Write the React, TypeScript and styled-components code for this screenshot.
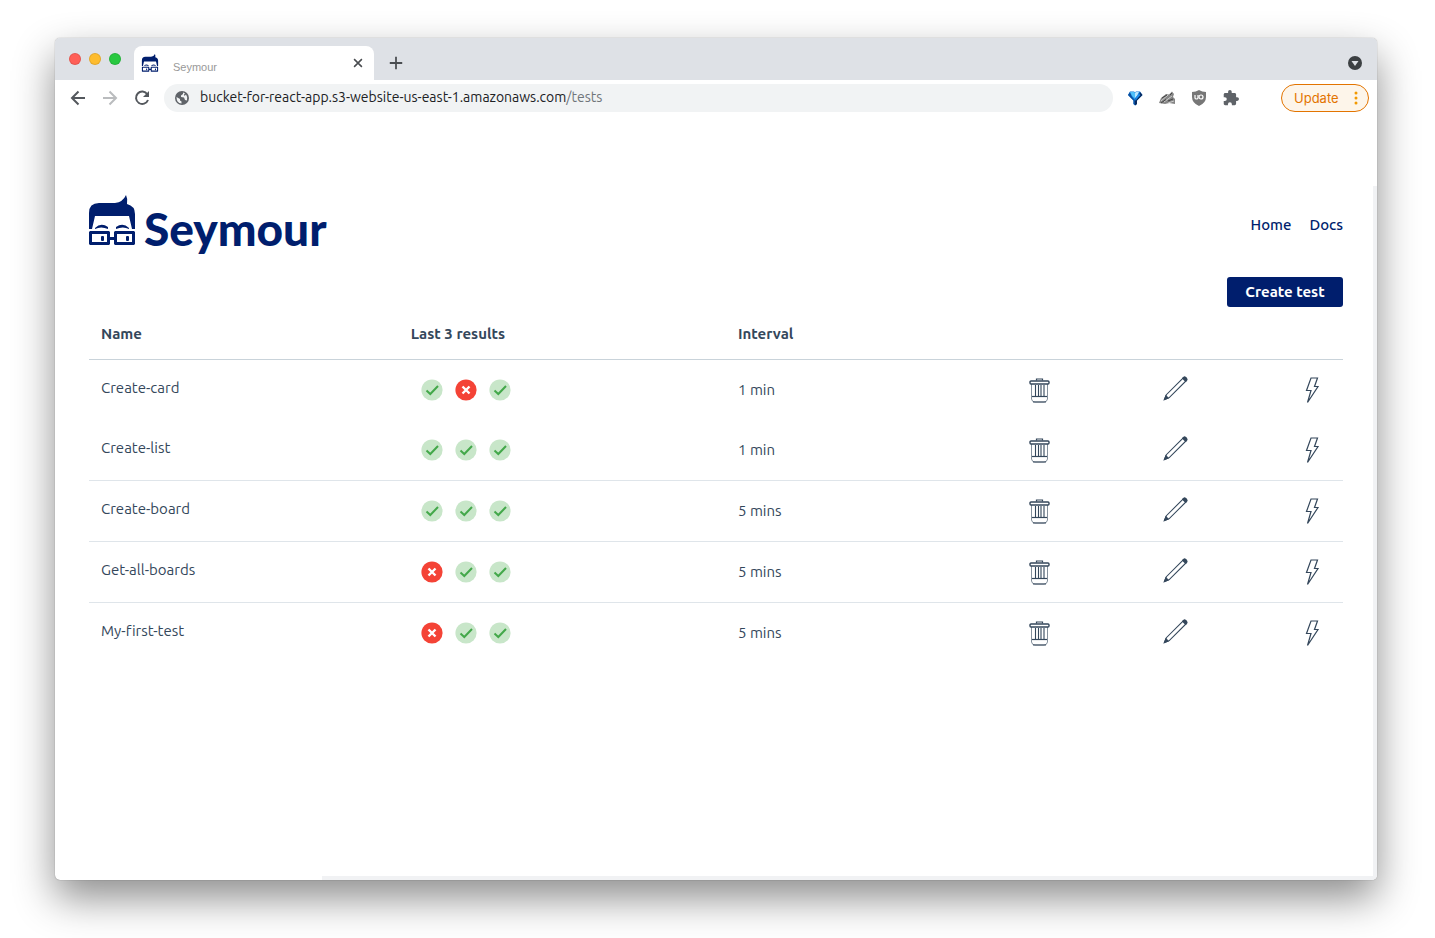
import React from "react";
import styled, { createGlobalStyle } from "styled-components";

const navy = "#001e6d";
const slate = "#34475b";
const uiFont = `Ubuntu, "Noto Sans", sans-serif`;

const GlobalStyle = createGlobalStyle`
  * { box-sizing: border-box; }
  body { margin: 0; background: #fff; font-family: ${uiFont}; font-variant-ligatures: none; }
  button { display: block; font: inherit; border: 0; padding: 0; background: none; cursor: pointer; }
  svg { display: block; }
`;

const Desktop = styled.div`
  display: flex;
  min-height: 100vh;
  padding: 38px 58px 58px 55px;
`;

const BrowserWindow = styled.div`
  position: relative;
  flex: 1;
  min-width: 0;
  display: flex;
  flex-direction: column;
  background: #fff;
  border-radius: 5px;
  overflow: hidden;
  box-shadow: 0 0 1px rgba(0, 0, 0, 0.5), 0 18px 40px rgba(0, 0, 0, 0.45);
`;

const TabStrip = styled.div`
  display: flex;
  align-items: flex-end;
  height: 42px;
  padding: 0 14px;
  background: #dee1e6;
`;

const Lights = styled.div`
  display: flex;
  gap: 8px;
  height: 42px;
  align-items: center;
  width: 65px;
`;

const Light = styled.span<{ $color: string }>`
  width: 12px;
  height: 12px;
  border-radius: 50%;
  background: ${(p) => p.$color};
  border: 1px solid rgba(0, 0, 0, 0.1);
`;

const Tab = styled.div`
  display: flex;
  align-items: center;
  width: 240px;
  height: 34px;
  padding: 0 9px 0 7px;
  border-radius: 8px 8px 0 0;
  background: #fff;
`;

const TabTitle = styled.span`
  flex: 1;
  padding: 8px 0 0 14px;
  font: 11px/14px "Liberation Sans", sans-serif;
  color: #999;
`;

const StripButton = styled.button`
  display: flex;
  align-items: center;
  justify-content: center;
  height: 34px;
`;

const NewTab = styled(StripButton)`
  margin-left: 14px;
`;

const TabSearch = styled(StripButton)`
  margin-left: auto;
`;

const Toolbar = styled.div`
  display: flex;
  align-items: center;
  height: 36px;
  padding: 0 8px 0 14px;
`;

const NavButtons = styled.div`
  display: flex;
  gap: 14px;
  width: 95px;
`;

const AddressBar = styled.div`
  flex: 1;
  min-width: 0;
  display: flex;
  align-items: center;
  gap: 11px;
  height: 28px;
  padding: 0 11px;
  border-radius: 14px;
  background: #f1f3f4;
`;

const Address = styled.div`
  padding-bottom: 2px;
  font-size: 14px;
  line-height: 20px;
  color: #202124;
  white-space: nowrap;
  span { color: #70757a; }
`;

const Extensions = styled.div`
  display: flex;
  gap: 16px;
  margin: 0 42px 0 14px;
`;

const UpdateButton = styled.button`
  display: flex;
  align-items: center;
  justify-content: space-between;
  width: 88px;
  height: 28px;
  padding: 0 10px 0 12px;
  border: 1px solid #e37400;
  border-radius: 14px;
  background: #fdf5ea;
  color: #e37400;
  font: 13px/16px Inter, sans-serif;
`;

const Page = styled.main`
  flex: 1;
  padding: 78px 34px 0;
`;

const Header = styled.header`
  display: flex;
  align-items: center;
  justify-content: space-between;
  height: 62px;
`;

const Brand = styled.a`
  display: flex;
  align-items: center;
  gap: 9px;
  color: ${navy};
  text-decoration: none;
`;

const BrandHead = styled.div`
  align-self: flex-start;
`;

const BrandName = styled.span`
  padding: 10px 0 2px;
  font: 900 46px/48px Lato, sans-serif;
`;

const Nav = styled.nav`
  display: flex;
  gap: 18px;
`;

const NavLink = styled.a`
  font-size: 15px;
  line-height: 20px;
  font-weight: 500;
  color: ${navy};
  text-decoration: none;
`;

const Actions = styled.div`
  display: flex;
  justify-content: flex-end;
  padding-top: 21px;
`;

const CreateButton = styled.button`
  width: 116px;
  height: 30px;
  border-radius: 3px;
  background: ${navy};
  color: #fff;
  font-size: 15px;
  line-height: 20px;
  font-weight: 700;
`;

const Table = styled.table`
  width: 100%;
  table-layout: fixed;
  border-collapse: separate;
  border-spacing: 0;
  color: ${slate};
`;

const HeadCell = styled.th`
  height: 53px;
  padding: 2px 12px 0;
  border-bottom: 1px solid #c9d3da;
  text-align: left;
  font-size: 15px;
  line-height: 20px;
  font-weight: 700;
`;

const Cell = styled.td`
  padding: 0 12px;
  font-size: 15px;
  line-height: 20px;
`;

const RaisedCell = styled(Cell)`
  padding-bottom: 4px;
`;

const Row = styled.tr<{ $line: boolean }>`
  height: ${(p) => (p.$line ? "61px" : "60px")};
  ${Cell} { border-bottom: ${(p) => (p.$line ? "1px solid #dfe5ea" : "0")}; }
`;

const Results = styled.div`
  display: flex;
  gap: 12px;
  padding-left: 10px;
`;

const ScrollTrack = styled.div<{ $side: "right" | "bottom" }>`
  position: absolute;
  right: 0;
  bottom: 0;
  background: #f1f2f4;
  ${(p) => (p.$side === "right" ? "top: 148px; width: 4px;" : "left: 267px; height: 4px;")}
`;

const Face = ({ width, height }: { width: number; height: number }) => (
  <svg width={width} height={height} viewBox="0 0 46 51" fill={navy} aria-hidden="true">
    <path d="M0 34V18Q0 8 10 8H26Q34 7 37 0Q39 4 38 9Q46 11 46 19V34H43L40 21H6L3 34Z" />
    <path d="M6 33Q12 27 19 32V34Q12 31 6 34ZM27 32Q34 27 40 33V34Q34 31 27 34Z" />
    <path
      fillRule="evenodd"
      d="M1 36H20L21 37V42H25V37L26 36H45L46 37V49L45 50H26L25 49V45H21V49L20 50H1L0 49V37ZM3 39V47H18V39ZM28 39V47H43V39Z"
    />
    <rect x="12" y="41" width="3" height="5" rx="1" />
    <rect x="37" y="41" width="3" height="5" rx="1" />
  </svg>
);

const StrokeIcon = ({ d, color = "#4a4d51", size = 18, width = 2 }: { d: string; color?: string; size?: number; width?: number }) => (
  <svg width={size} height={size} viewBox="0 0 18 18" fill="none" stroke={color} strokeWidth={width} aria-hidden="true">
    <path d={d} />
  </svg>
);

const Reload = () => (
  <svg width="18" height="18" viewBox="0 0 18 18" aria-hidden="true">
    <path d="M14.3 5.2A6.2 6.2 0 1 0 15 11" fill="none" stroke="#54585d" strokeWidth="2" />
    <path d="M16 2V8H10Z" fill="#54585d" />
  </svg>
);

const Globe = () => (
  <svg width="14" height="14" viewBox="0 0 14 14" aria-hidden="true">
    <circle cx="7" cy="7" r="7" fill="#5f6368" />
    <path d="M1.5 6L5 8V9.500L6.500 10.500V12.600Q1.500 12 1.500 6ZM8 1.500V3L6 4.500V6L9 6.500L10 9L12 9.500Q13 6 11 3.500L9.500 5L9 3.500L10 2.200Z" fill="#f1f3f4" />
  </svg>
);

const Gem = () => (
  <svg width="16" height="16" viewBox="0 0 16 16" aria-hidden="true">
    <path d="M3 1.500H7L8 2.500L9 1.500H13L15.500 5L10 10.500V14L8 15.500L6.500 14V10.500L1 5Z" fill="#1277d4" />
    <path d="M3 2L5 7L8 11V15L6.500 14V10.500L1 5Z" fill="#0a4fa0" />
    <path d="M3 2H7L8 3V9L5 6Z" fill="#4fc0fa" />
    <path d="M9 2H12L10 6L8 8V3Z" fill="#b9e6ff" />
    <path d="M13 2L15.500 5L10 10.500V14L8 15.500V11L12 6Z" fill="#07295f" />
    <path d="M12 4L13.500 5L9 10V7Z" fill="#1d8bea" />
  </svg>
);

const Badger = () => (
  <svg width="16" height="16" viewBox="0 0 16 16" aria-hidden="true">
    <path d="M0 13L2 8L7 4L10 4.500L13 1.500L15 4L14 7L16 9V14L10 13L6 14Z" fill="#858585" />
    <path d="M2 11L9 5M5 12L13 6M9 13L15 11" stroke="#ccc" />
    <path d="M3 8L8 5M2 13L7 9.500M9 11L14 9M11 5L13 3" stroke="#444" />
  </svg>
);

const Shield = () => (
  <svg width="16" height="16" viewBox="0 0 16 16" aria-hidden="true">
    <path d="M8 0Q11 2 15 2V7Q15 13 8 16Q1 13 1 7V2Q5 2 8 0Z" fill="#777" />
    <path d="M4 5V8Q4 9 5.500 9T7 8V5" fill="none" stroke="#fff" strokeWidth="1.200" />
    <circle cx="10" cy="7" r="2" fill="none" stroke="#fff" strokeWidth="1.200" />
  </svg>
);

const Puzzle = () => (
  <svg width="16" height="16" viewBox="1 1 22 22" aria-hidden="true">
    <path fill="#5f6368" d="M20.5 11H19V7c0-1.100-.9-2-2-2h-4V3.500a2.500 2.500 0 0 0-5 0V5H4c-1.100 0-2 .9-2 2v3.800h1.500a2.700 2.700 0 0 1 0 5.400H2V20c0 1.100.9 2 2 2h3.800v-1.500a2.700 2.700 0 0 1 5.400 0V22H17c1.100 0 2-.9 2-2v-4h1.500a2.500 2.500 0 0 0 0-5Z" />
  </svg>
);

const Status = ({ ok }: { ok: boolean }) => (
  <svg width="22" height="22" viewBox="0 0 22 22" role="img" aria-label={ok ? "Passed" : "Failed"}>
    <circle cx="11" cy="11" r="10.600" fill={ok ? "#c8e6c9" : "#f44336"} />
    {ok ? (
      <path d="M5.500 11.500L9.300 15L17 7" fill="none" stroke="#43a84a" strokeWidth="2" />
    ) : (
      <path d="M7.500 7.500L14.500 14.500M14.500 7.500L7.500 14.500" stroke="#fff" strokeWidth="2.400" />
    )}
  </svg>
);

const Trash = () => (
  <svg width="21" height="25" viewBox="0 0 21 25" fill="none" stroke={slate} aria-hidden="true">
    <path d="M7.500 2.500V1H13.500V2.500" strokeWidth="1.200" />
    <rect x="1" y="3" width="19" height="3" rx="1" strokeWidth="1.400" />
    <path d="M2.500 6V21Q3 24 6 24H15Q18 24 18.500 21V6" strokeWidth="1" strokeOpacity="0.6" />
    <path d="M4 24H17" strokeWidth="1" />
    <path d="M3 18.500H18" strokeWidth="1.200" />
    <path d="M6.500 7V18M9.500 7V18M12 7V18M15 7V18" strokeWidth="1.100" />
  </svg>
);

const Pencil = () => (
  <svg width="25" height="25" viewBox="0 0 26 26" fill="none" stroke={slate} strokeWidth="1.100" aria-hidden="true">
    <path d="M1.500 24.500L3.500 19.500L20 3Q22 0 24 2T23 6L6.500 22.500Z" />
    <path d="M1.500 24.500L3 20.500L5.500 23ZM20.500 2.500Q22 0 24 2T23.500 5.500Z" fill={slate} />
  </svg>
);

const Bolt = () => (
  <svg width="24" height="28" viewBox="0 0 24 28" fill="none" stroke={slate} strokeWidth="1.200" aria-hidden="true">
    <path d="M11 2H17.500L14.500 10.500H18L7.500 26.500L11 14.500H6.500Z" />
  </svg>
);

const tests = [
  { name: "Create-card", results: [true, false, true], interval: "1 min", line: false },
  { name: "Create-list", results: [true, true, true], interval: "1 min", line: true },
  { name: "Create-board", results: [true, true, true], interval: "5 mins", line: true },
  { name: "Get-all-boards", results: [false, true, true], interval: "5 mins", line: true },
  { name: "My-first-test", results: [false, true, true], interval: "5 mins", line: false },
];

const columns = ["24.7%", "26.1%", "23.2%", "10.7%", "10.9%", "4.4%"];

export default function App() {
  return (
    <>
      <GlobalStyle />
      <Desktop>
        <BrowserWindow>
          <TabStrip>
            <Lights>
              <Light $color="#ff5f57" />
              <Light $color="#febc2e" />
              <Light $color="#28c840" />
            </Lights>
            <Tab>
              <Face width={18} height={18} />
              <TabTitle>Seymour</TabTitle>
              <StripButton aria-label="Close tab">
                <StrokeIcon size={14} d="M4 4L14 14M14 4L4 14" />
              </StripButton>
            </Tab>
            <NewTab aria-label="New tab">
              <StrokeIcon size={16} d="M9 2V16M2 9H16" />
            </NewTab>
            <TabSearch aria-label="Search tabs">
              <svg width="16" height="16" viewBox="0 0 16 16" aria-hidden="true">
                <circle cx="8" cy="8" r="7" fill="#3c4043" />
                <path d="M4.500 6H11.500L8 11Z" fill="#dee1e6" />
              </svg>
            </TabSearch>
          </TabStrip>
          <Toolbar>
            <NavButtons>
              <button aria-label="Back"><StrokeIcon color="#54585d" d="M16 9H3M9.500 2.500L3 9L9.500 15.500" /></button>
              <button aria-label="Forward"><StrokeIcon color="#babcbe" d="M2 9H15M8.500 2.500L15 9L8.500 15.500" /></button>
              <button aria-label="Reload"><Reload /></button>
            </NavButtons>
            <AddressBar>
              <Globe />
              <Address>bucket-for-react-app.s3-website-us-east-1.amazonaws.com<span>/tests</span></Address>
            </AddressBar>
            <Extensions>
              <Gem />
              <Badger />
              <Shield />
              <Puzzle />
            </Extensions>
            <UpdateButton>
              Update
              <svg width="4" height="14" viewBox="0 0 4 14" fill="#f29900" aria-hidden="true">
                <circle cx="2" cy="2" r="1.500" /><circle cx="2" cy="7" r="1.500" /><circle cx="2" cy="12" r="1.500" />
              </svg>
            </UpdateButton>
          </Toolbar>
          <Page>
            <Header>
              <Brand href="#home">
                <BrandHead><Face width={46} height={51} /></BrandHead>
                <BrandName>Seymour</BrandName>
              </Brand>
              <Nav>
                <NavLink href="#home">Home</NavLink>
                <NavLink href="#docs">Docs</NavLink>
              </Nav>
            </Header>
            <Actions><CreateButton>Create test</CreateButton></Actions>
            <Table>
              <colgroup>{columns.map((w, i) => <col key={i} width={w} />)}</colgroup>
              <thead>
                <tr>
                  <HeadCell>Name</HeadCell>
                  <HeadCell>Last 3 results</HeadCell>
                  <HeadCell>Interval</HeadCell>
                  <HeadCell /><HeadCell /><HeadCell />
                </tr>
              </thead>
              <tbody>
                {tests.map((t) => (
                  <Row key={t.name} $line={t.line}>
                    <RaisedCell>{t.name}</RaisedCell>
                    <Cell><Results>{t.results.map((ok, i) => <Status key={i} ok={ok} />)}</Results></Cell>
                    <Cell>{t.interval}</Cell>
                    <Cell><button aria-label={`Delete ${t.name}`}><Trash /></button></Cell>
                    <RaisedCell><button aria-label={`Edit ${t.name}`}><Pencil /></button></RaisedCell>
                    <Cell><button aria-label={`Run ${t.name}`}><Bolt /></button></Cell>
                  </Row>
                ))}
              </tbody>
            </Table>
          </Page>
          <ScrollTrack $side="right" />
          <ScrollTrack $side="bottom" />
        </BrowserWindow>
      </Desktop>
    </>
  );
}
